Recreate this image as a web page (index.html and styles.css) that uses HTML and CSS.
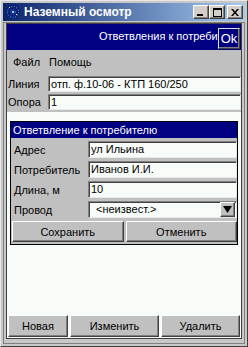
FILE: index.html
```html
<!DOCTYPE html>
<html lang="ru">
<head>
  <meta charset="UTF-8" />
  <meta name="viewport" content="width=device-width, initial-scale=1.0" />
  <title>Наземный осмотр</title>
  <link rel="stylesheet" href="styles.css">
</head>
<body>
  <div class="window">
    <div class="titlebar">
      <svg class="app-icon" width="16" height="16" viewBox="0 0 16 16">
        <circle cx="8" cy="8" r="7" fill="#101c70" />
        <circle cx="8" cy="8" r="5.5" fill="none" stroke="#3fc8ff" stroke-width="1" stroke-dasharray="1 1.6" />
        <circle cx="8" cy="8" r="2.5" fill="none" stroke="#2a9cf0" stroke-width="1" stroke-dasharray="1 1.4" />
        <rect x="4" y="3" width="1" height="1" fill="#ffffff" />
        <rect x="11" y="10" width="1" height="1" fill="#ffffff" />
        <rect x="7" y="7" width="2" height="2" fill="#8ee8ff" />
      </svg>
      <span class="title">Наземный осмотр</span>
      <div class="caption-buttons">
        <span class="cap-btn">
          <svg width="8" height="7" viewBox="0 0 8 7"><rect x="0" y="5" width="6" height="2" fill="#000" /></svg>
        </span>
        <span class="cap-btn">
          <svg width="9" height="9" viewBox="0 0 9 9"><path d="M0 0h9v9h-9z M1 2v6h7v-6z" fill="#000" fill-rule="evenodd" /></svg>
        </span>
        <span class="cap-btn cap-close">
          <svg width="8" height="7" viewBox="0 0 8 7"><path d="M0 0h2l2 2.5 2-2.5h2l-3 3.5 3 3.5h-2l-2-2.5-2 2.5h-2l3-3.5z" fill="#000" /></svg>
        </span>
      </div>
    </div>

    <div class="client">
      <div class="client-inner">
        <div class="header">
          <div class="header-clip">Ответвления к потребителю</div>
          <button class="ok-btn">Ok</button>
        </div>

        <div class="menu">
          <span>Файл</span>
          <span>Помощь</span>
        </div>

        <div class="top-fields">
          <div class="row">
            <label>Линия</label>
            <div class="field">отп. ф.10-06 - КТП 160/250</div>
          </div>
          <div class="row">
            <label>Опора</label>
            <div class="field">1</div>
          </div>
        </div>

        <div class="workspace">
          <div class="group">
            <div class="group-title">Ответвление к потребителю</div>
            <div class="group-body">
              <div class="group-row">
                <label>Адрес</label>
                <div class="field">ул Ильина</div>
              </div>
              <div class="group-row">
                <label>Потребитель</label>
                <div class="field">Иванов И.И.</div>
              </div>
              <div class="group-row">
                <label>Длина, м</label>
                <div class="field">10</div>
              </div>
              <div class="group-row">
                <label>Провод</label>
                <div class="field select">
                  <span class="select-text">&lt;неизвест.&gt;</span>
                  <span class="select-arrow">
                    <svg width="9" height="9" viewBox="0 0 9 9"><path d="M0 1h9l-4.5 7z" fill="#000" /></svg>
                  </span>
                </div>
              </div>
              <div class="group-buttons">
                <button class="btn">Сохранить</button>
                <button class="btn">Отменить</button>
              </div>
            </div>
          </div>
        </div>

        <div class="bottom-buttons">
          <button class="btn">Новая</button>
          <button class="btn">Изменить</button>
          <button class="btn">Удалить</button>
        </div>
      </div>
    </div>
  </div>
</body>
</html>
```

FILE: styles.css
```css
body {
  margin: 0;
  font-family: "Liberation Sans", Arial, sans-serif;
  font-size: 11px;
  color: #000;
  background: #c0c0c0;
}

.window {
  width: 248px;
  height: 347px;
  box-sizing: border-box;
  display: flex;
  flex-direction: column;
  background: #c8c8c8;
  border: 1px solid;
  border-color: #e8e8e8 #404040 #404040 #e8e8e8;
  padding: 2px;
}

/* title bar */
.titlebar {
  height: 18px;
  flex: none;
  display: flex;
  align-items: center;
  margin-bottom: 1px;
  background: linear-gradient(to right, #0a246a, #a6caf0);
}
.app-icon {
  margin-left: 2px;
  margin-right: 3px;
}
.title {
  color: #fff;
  font-weight: bold;
  font-size: 12px;
  flex: 1;
  white-space: nowrap;
}
.caption-buttons {
  display: flex;
  padding-right: 2px;
}
.cap-btn {
  width: 16px;
  height: 14px;
  box-sizing: border-box;
  display: flex;
  align-items: center;
  justify-content: center;
  background: #d4d0c8;
  border: 1px solid;
  border-color: #fff #404040 #404040 #fff;
  box-shadow: inset -1px -1px #808080;
}
.cap-close {
  margin-left: 2px;
}

/* client frame */
.client {
  flex: 1;
  display: flex;
  min-width: 0;
  border: 1px solid #808080;
  padding: 0 2px 4px;
}
.client-inner {
  flex: 1;
  min-width: 0;
  display: flex;
  flex-direction: column;
  border: 1px solid #404040;
  background: #c0c0c0;
}

/* navy header */
.header {
  height: 26px;
  flex: none;
  display: flex;
  background: #000080;
  color: #fff;
}
.header-clip {
  flex: 1;
  min-width: 0;
  overflow: hidden;
  white-space: nowrap;
  padding-left: 92px;
  line-height: 25px;
}
.ok-btn {
  align-self: flex-start;
  flex: none;
  margin: 4px 1px 0 0;
  width: 22px;
  height: 21px;
  padding: 0;
  background: #000080;
  color: #fff;
  font-family: "Liberation Sans", Arial, sans-serif;
  font-size: 13px;
  border: 1px solid;
  border-color: #e0e0e0 #404040 #404040 #e0e0e0;
  box-shadow: inset -1px -1px #808080;
}

/* menu */
.menu {
  height: 23px;
  flex: none;
  display: flex;
  gap: 9px;
  align-items: center;
  padding-left: 6px;
}

/* Линия / Опора */
.top-fields {
  display: flex;
  flex-direction: column;
  gap: 2px;
  padding: 3px 0 2px 1px;
}
.row {
  display: flex;
  align-items: center;
  height: 16px;
}
.row label {
  width: 40px;
}
.row .field {
  flex: 1;
  height: 16px;
}

.field {
  box-sizing: border-box;
  min-width: 0;
  background: #f8fcf8;
  border: 1px solid;
  border-color: #808080 #e8e8e8 #e8e8e8 #808080;
  box-shadow: inset 1px 1px #404040;
  padding-left: 2px;
  line-height: 14px;
  white-space: nowrap;
  overflow: hidden;
}

/* white work area */
.workspace {
  flex: 1;
  background: #f8fcf8;
  padding: 9px 3px 0;
}
.group {
  border: 1px solid #000;
}
.group-title {
  height: 16px;
  line-height: 16px;
  background: #000080;
  color: #fff;
  padding-left: 2px;
  white-space: nowrap;
  overflow: hidden;
}
.group-body {
  background: #c0c0c0;
  padding: 3px 0 2px 2px;
  display: flex;
  flex-direction: column;
  gap: 3px;
}
.group-row {
  display: flex;
  align-items: center;
  height: 17px;
}
.group-row label {
  width: 74px;
  padding-left: 1px;
}
.group-row .field {
  flex: 1;
  height: 17px;
  line-height: 15px;
}

.select {
  display: flex;
  padding-left: 7px;
}
.select-text {
  flex: 1;
}
.select-arrow {
  width: 15px;
  height: 15px;
  margin-right: 1px;
  box-sizing: border-box;
  display: flex;
  align-items: center;
  justify-content: center;
  background: #c0c0c0;
  border: 1px solid;
  border-color: #fff #404040 #404040 #fff;
  box-shadow: inset -1px -1px #808080;
}

.btn {
  box-sizing: border-box;
  height: 21px;
  padding: 0;
  background: #c0c0c0;
  font-family: "Liberation Sans", Arial, sans-serif;
  font-size: 11px;
  color: #000;
  border: 1px solid;
  border-color: #fff #404040 #404040 #fff;
  box-shadow: inset -1px -1px #808080;
}

.group-buttons {
  display: grid;
  grid-template-columns: 1fr 1fr;
  gap: 2px;
  margin-left: -1px;
}

.bottom-buttons {
  display: grid;
  grid-template-columns: 60px 89px 1fr;
  gap: 2px;
  padding: 0 1px 1px 1px;
  background: #f8fcf8;
}
.bottom-buttons .btn {
  height: 22px;
}
```
